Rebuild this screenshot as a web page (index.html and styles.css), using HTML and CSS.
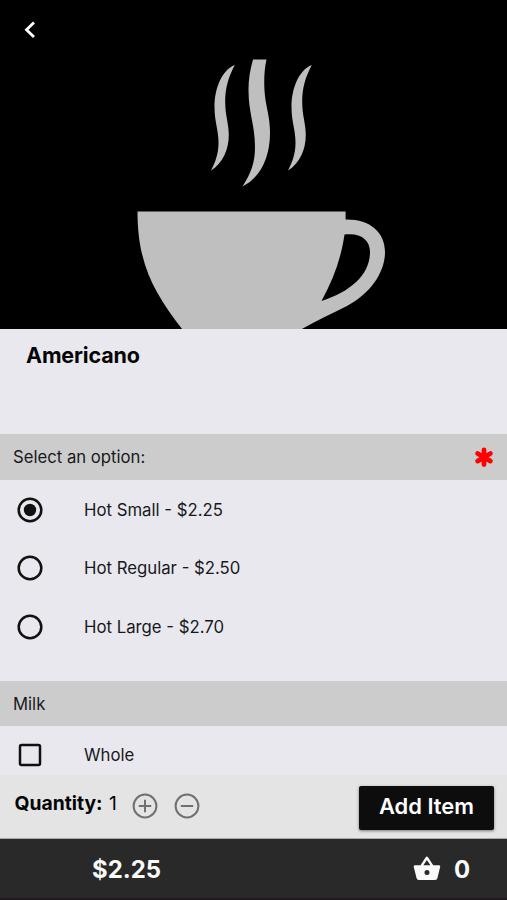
FILE: index.html
```html
<!DOCTYPE html>
<html lang="en">
<head>
<meta charset="utf-8">
<title>Americano</title>
<link rel="stylesheet" href="styles.css">
</head>
<body>
<main class="screen">
  <header class="hero">
    <svg class="hero-art" viewBox="0 0 507 329" aria-hidden="true">
      <g fill="#bfbfbf">
        <path d="M234.8 65C222 70 214.500 88 214.500 107C214.500 122 218.500 130 218.500 143C218.500 154 215 163 211 170.500C223 163 228.800 149 228.800 135C228.800 124 225.400 116 225.200 103C225 88 228.500 77 234.800 65Z"/>
        <path d="M311.800 65C299 70 291.500 88 291.500 107C291.500 122 295.500 130 295.500 143C295.500 154 292 163 288 170.500C300 163 305.800 149 305.800 135C305.800 124 302.400 116 302.200 103C302 88 305.500 77 311.800 65Z"/>
        <path d="M253 59.500H266.500C264 70 263.700 85 265 96C266.500 109 270 117 270 133C270 158 260 178 242.500 186.500C251 173 255 163 255 147C255 125 248.500 113 248.500 90C248.500 79 250 70 253 59.500Z"/>
        <path fill-rule="evenodd" d="M137.500 211.500H345.600V219.400C370 219 385 232 385 252C385 272 371 293 347 306C331 314 316 321 301 329.500H182.500C155 294 137.500 265 137.500 211.500ZM344.500 234.500C341 259 333 280 321.500 301C350 292 370 275 370 252C370 240 361 232.500 344.500 234.500Z"/>
      </g>
      <path d="M34 22.500L26.500 29.700L34 37" fill="none" stroke="#fff" stroke-width="2.800"/>
    </svg>
  </header>
  <section class="title"><h1>Americano</h1></section>
  <section>
    <h2 class="group group-first"><span>Select an option:</span>
      <svg width="20" height="20" viewBox="0 0 20 20" aria-hidden="true"><path d="M10 3V17.600M3.600 6.500L16.400 14.100M16.400 6.500L3.600 14.100" stroke="#f00" stroke-width="4.800" stroke-linecap="round"/></svg>
    </h2>
    <div class="options">
      <label class="option"><svg class="mark" viewBox="0 0 26 26"><circle class="line" cx="13" cy="13" r="11.300"/><circle cx="13" cy="13" r="6.200"/></svg><span>Hot Small - $2.25</span></label>
      <label class="option"><svg class="mark" viewBox="0 0 26 26"><circle class="line" cx="13" cy="13" r="11.300"/></svg><span>Hot Regular - $2.50</span></label>
      <label class="option"><svg class="mark" viewBox="0 0 26 26"><circle class="line" cx="13" cy="13" r="11.300"/></svg><span>Hot Large - $2.70</span></label>
    </div>
  </section>
  <section>
    <h2 class="group group-milk"><span>Milk</span></h2>
    <label class="option"><svg class="mark" viewBox="0 0 26 26"><rect class="line" x="3" y="3" width="20" height="20" rx="1.500"/></svg><span>Whole</span></label>
  </section>
  <section class="quantity">
    <strong>Quantity:</strong><span class="count">1</span>
    <svg class="step" viewBox="0 0 26 26"><circle cx="13" cy="13" r="11.400"/><path d="M6.800 13H19.200M13 6.800V19.200"/></svg>
    <svg class="step" viewBox="0 0 26 26"><circle cx="13" cy="13" r="11.400"/><path d="M6.800 13H19.200"/></svg>
    <button class="add">Add Item</button>
  </section>
  <footer class="cart">
    <span class="total">$2.25</span>
    <svg class="basket" viewBox="0 0 28 25" aria-hidden="true"><path fill="#fafafa" fill-rule="evenodd" d="M13.800 .500Q14.500 .500 15 1.300L20.200 9.300H26Q27.600 9.300 27.200 10.800L24.400 22.300Q24 24 22.200 24H5.800Q4 24 3.600 22.300L.700 10.800Q.300 9.300 2 9.300H7.500L12.700 1.300Q13.200 .500 13.800 .500ZM13.900 4L10.400 9.300H17.400ZM14 14A2.500 2.500 0 1 0 14 19A2.500 2.500 0 1 0 14 14Z"/></svg>
    <span class="items">0</span>
  </footer>
</main>
</body>
</html>
```
FILE: styles.css
```css
* { box-sizing: border-box; }
body { margin: 0; background: #e9e8ee; color: #18181b; font-family: Inter, "Liberation Sans", sans-serif; }
.screen { width: 507px; height: 900px; overflow: hidden; display: flex; flex-direction: column; }
h1, h2 { margin: 0; }
svg { display: block; flex: none; }
.hero { height: 329px; background: #000; flex: none; }
.hero-art { width: 507px; height: 329px; }
.title { height: 105px; padding: 13px 26px; }
h1 { color: #050506; font-size: 21.500px; line-height: 26px; font-weight: 700; letter-spacing: -.15px; }
.group { display: flex; align-items: center; justify-content: space-between; padding: 0 13px; background: #ccc; font-size: 16.700px; font-weight: 400; }
.group-first { height: 46px; }
.group-milk { height: 45px; }
.options { height: 201px; padding-top: .500px; }
.option { display: flex; align-items: center; gap: 41px; height: 58.600px; padding-left: 17px; font-size: 16.750px; }
.mark { width: 26px; height: 26px; fill: #111; }
.line { fill: none; stroke: #111; stroke-width: 2.500; }
.group-milk + .option { height: 49px; padding-top: 9px; }
.quantity { display: flex; align-items: center; height: 64px; padding: 0 13px 0 14.500px; background: #e4e4e4; border-bottom: 1px solid #aaa; color: #050506; font-size: 19.300px; }
.quantity strong, .count { padding-bottom: 7px; }
.count { width: 10px; margin: 0 13px 0 6.500px; }
.step { width: 26px; height: 26px; margin-right: 16px; margin-bottom: 1px; fill: none; stroke: #707070; stroke-width: 2; }
.add { width: 135px; height: 44px; margin: 2px 0 0 auto; padding: 0 0 4px; border: 0; border-radius: 2px; background: #0d0d0d; box-shadow: 0 1px 3px #777; color: #fff; font: 600 21.900px Inter, sans-serif; }
.cart { display: flex; align-items: center; height: 61px; padding: 2px 37px 0 92px; background: #292929; border-bottom: 2px solid #21191d; color: #fafafa; font-size: 23.900px; font-weight: 700; }
.basket { width: 28px; height: 25px; margin: 0 13px 2px auto; }
```
